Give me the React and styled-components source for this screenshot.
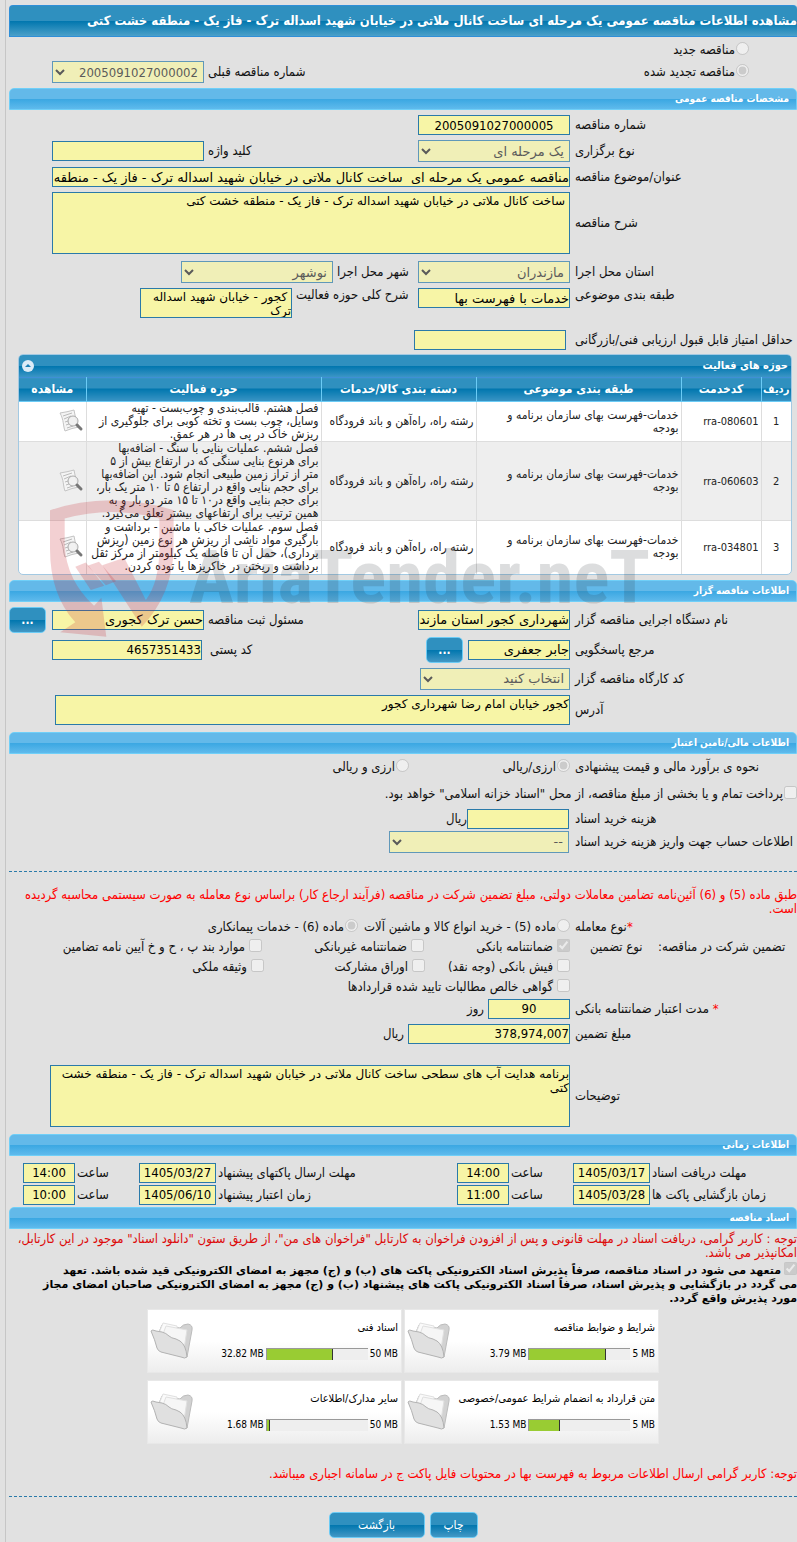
import React from 'react';
import styled, { createGlobalStyle } from 'styled-components';
import { useId } from 'react';

const GlobalStyle = createGlobalStyle`
    *{
        box-sizing: border-box;
    }
    body{
        margin: 0;
        background: #e1e1e1;
        overflow-x: hidden;
    }
    body, button{
        font-family: 'DejaVu Sans Condensed', 'DejaVu Sans', sans-serif;
    }
`

const numberFont = `'DejaVu Sans Condensed', 'DejaVu Sans', sans-serif`;
const textFont = `'DejaVu Sans', sans-serif`;

const Page = styled.main`
    direction: rtl;
    margin-left: 5px;
    padding: 5px 0 5px 3px;
    border-left: 1px solid #c6c6c6;
    color: #111;
    font-size: 13px;
    line-height: 14px;
    overflow: hidden;
`

const TitleBar = styled.h1`
    display: flex;
    align-items: center;
    height: 32px;
    margin: 0;
    border: 1px solid #2f8fd8;
    border-right: 0;
    border-radius: 4px 4px 0 0;
    background: linear-gradient(#2f90bf 0 50%, #0076ae 50%, #4ba0c9);
    color: #fff;
    font-size: 13px;
    font-weight: bold;
    white-space: nowrap;
`

const SectionBar = styled.h2`
    display: flex;
    align-items: center;
    height: 22px;
    margin: ${props => props.$top || 0}px 0 0;
    padding: 0 7px;
    border: 1px solid #6fcff8;
    border-radius: 5px 5px 0 0;
    background: linear-gradient(#63b9e9 0 50%, #3aa7e2 50%, #5fbaec);
    color: #fff;
    font-size: 10px;
    font-weight: bold;
`

const Stack = styled.div`
    display: flex;
    flex-direction: column;
    gap: ${props => props.$gap || 0}px;
    padding-top: ${props => props.$top || 0}px;
`

const Row = styled.div`
    display: flex;
    align-items: ${props => props.$align || 'center'};
    gap: ${props => props.$gap || 0}px;
    min-height: ${props => props.$height || 20}px;
    margin-top: ${props => props.$top || 0}px;
    white-space: nowrap;
`

const Label = styled.label`
    flex: none;
    width: ${props => props.$width || 222}px;
    margin-left: ${props => props.$gap || 5}px;
    text-align: left;
`

const Space = styled.div`
    flex: none;
    width: ${props => props.$width || 227}px;
`

const Input = styled.input`
    flex: none;
    width: ${props => props.$width || 152}px;
    height: 20px;
    margin: 0;
    padding: 1px 0;
    border: 1px solid #2a7aa9;
    border-radius: 0;
    background: #f7f5a6;
    color: #000;
    font-family: ${props => props.$number ? numberFont : textFont};
    font-size: 13px;
    text-align: ${props => props.$align || 'right'};
`

const Select = styled.select`
    flex: none;
    width: ${props => props.$width || 152}px;
    height: 22px;
    margin: 0;
    padding: 0 1px;
    border: 1px solid #2a7aa9;
    border-radius: 0;
    background-color: #f7f5a6;
    color: #222;
    font-family: ${props => props.$number ? numberFont : textFont};
    font-size: 13px;
    opacity: 0.7;
`

const TextArea = styled.textarea`
    flex: none;
    width: ${props => props.$width}px;
    height: ${props => props.$height}px;
    margin: 0;
    padding: 1px ${props => props.$pad || 0}px;
    border: 1px solid #2a7aa9;
    border-radius: 0;
    background: #f7f5a6;
    color: #000;
    font-family: ${textFont};
    font-size: 12px;
    line-height: 14px;
    resize: none;
    overflow: hidden;
`

const ChoiceLabel = styled.label`
    display: flex;
    flex: none;
    align-items: center;
    gap: ${props => props.$gap || 1}px;
    width: ${props => props.$width ? props.$width + 'px' : 'auto'};
    input{
        flex: none;
        width: 13px;
        height: 13px;
        margin: 0 0 3px;
    }
`

const Button = styled.button`
    flex: none;
    width: ${props => props.$width || 37}px;
    height: 26px;
    padding: 0;
    border: 1px solid #6bcbf5;
    border-radius: 5px;
    background: linear-gradient(#2f90bf 0 50%, #0076ae 50%, #4398c5);
    color: #fff;
    font-size: 12px;
    font-weight: ${props => props.$bold ? 'bold' : 'normal'};
`

const Notice = styled.p`
    margin: ${props => props.$top || 0}px 0 0;
    color: ${props => props.$color || '#f00'};
    white-space: nowrap;
`

const Commitment = styled.label`
    display: block;
    margin-top: 2px;
    color: #000;
    font-family: ${textFont};
    font-size: 11px;
    font-weight: bold;
    line-height: 14px;
    white-space: nowrap;
    input{
        width: 13px;
        height: 13px;
        margin: 0 0 0 3px;
        vertical-align: -1px;
    }
`

const Required = styled.span`
    color: #f00;
`

const Divider = styled.hr`
    margin: ${props => props.$top}px 0 0;
    border: 0;
    border-top: 1px dashed #2a7aa9;
`

const Panel = styled.section`
    margin: 4px 5px 5px 9px;
    border: 1px solid #a3c9e2;
    border-radius: 5px;
    background: #fff;
    overflow: hidden;
`

const PanelHead = styled.div`
    display: flex;
    align-items: center;
    justify-content: space-between;
    height: 22px;
    padding: 0 3px;
    background: linear-gradient(#2f90bf 0 50%, #0076ae 50%, #3b95c5);
    h3{
        margin: 0;
        color: #fff;
        font-size: 11px;
    }
    button{
        display: flex;
        width: 12px;
        height: 12px;
        padding: 0;
        border: 0;
        border-radius: 6px;
        background: #dcebf7;
    }
`

const Table = styled.table`
    width: 100%;
    border-collapse: collapse;
    table-layout: fixed;
    font-size: 12px;
    line-height: 13px;
    th{
        height: 24px;
        padding: 0;
        border-left: 1px solid #6bcbf5;
        border-top: 1px solid #3f8fd6;
        border-bottom: 1px solid #6bcbf5;
        background: linear-gradient(#2f90bf 0 45%, #0076ae 45%, #3b95c5);
        color: #fff;
        font-size: 12px;
        white-space: nowrap;
    }
    th:first-child{
        font-size: 11px;
    }
    td{
        padding: 0 2px;
        border-left: 1px solid #ddd;
        border-bottom: 1px solid #ddd;
        color: #222;
        text-align: right;
        white-space: pre;
    }
    tr:nth-child(even) td{
        background: #eee;
    }
    tr:last-child td{
        border-bottom: 0;
    }
    th:last-child, td:last-child{
        border-left: 0;
        padding: 0;
    }
    td:nth-child(-n+2){
        font-size: 11px;
    }
    td:first-child{
        text-align: center;
    }
    svg{
        display: block;
        margin-right: 2px;
    }
`

const Marked = styled.div`
    position: relative;
`

const Watermark = styled.div`
    position: absolute;
    top: 146px;
    left: 41px;
    display: flex;
    gap: 15px;
    direction: ltr;
    pointer-events: none;
    color: rgba(40, 44, 48, 0.16);
    font: bold 75px/100px 'Liberation Sans Narrow', 'Roboto Condensed', 'DejaVu Sans Condensed', sans-serif;
    svg{
        flex: none;
        width: 124px;
        height: 137px;
    }
    span{
        padding-top: 27px;
    }
`

const Cards = styled.div`
    display: grid;
    grid-template-columns: 255px 255px;
    justify-content: center;
    gap: 7px 2px;
    margin-top: 3px;
`

const Card = styled.div`
    display: flex;
    align-items: center;
    justify-content: space-between;
    height: 64px;
    padding: 0 3px 0 2px;
    border: 1px solid #e8e8e8;
    background: linear-gradient(#fff 50%, #ededed);
    color: #000;
    font-size: 11px;
    white-space: nowrap;
    svg{
        flex: none;
    }
`

const CardBody = styled.div`
    display: flex;
    flex-direction: column;
    gap: 12px;
`

const Usage = styled.div`
    display: flex;
    align-items: center;
    gap: 2px;
    direction: ltr;
    justify-content: flex-end;
    font-size: 10px;
`

const Meter = styled.div`
    width: 102px;
    height: 12px;
    border-top: 1px solid #999;
    border-left: 1px solid #999;
    background: #eee;
    div{
        height: 100%;
        border-right: 1px solid #333;
        background: #9c3;
    }
`

const Actions = styled.div`
    display: flex;
    justify-content: center;
    gap: 5px;
    margin-top: 15px;
`

const activities = [
    {
        code: 'rra-080601',
        height: 39,
        scope: 'فصل هشتم. قالب‌بندی و چوب‌بست - تهیه\nوسایل، چوب بست و تخته کوبی برای جلوگیری از\nریزش خاک در پی ها در هر عمق.',
    },
    {
        code: 'rra-060603',
        height: 79,
        scope: 'فصل ششم. عملیات بنایی با سنگ - اضافه‌بها\nبرای هرنوع بنایی سنگی که در ارتفاع بیش از ۵\nمتر از تراز زمین طبیعی انجام شود. این اضافه‌بها\nبرای حجم بنایی واقع در ارتفاع ۵ تا ۱۰ متر یک بار،\nبرای حجم بنایی واقع در۱۰ تا ۱۵ متر دو بار و به\nهمین ترتیب برای ارتفاعهای بیشتر تعلق می‌گیرد.',
    },
    {
        code: 'rra-034801',
        height: 53,
        scope: 'فصل سوم. عملیات خاکی با ماشین - برداشت و\nبارگیری مواد ناشی از ریزش هر نوع زمین (ریزش\nبرداری)، حمل آن تا فاصله یک کیلومتر از مرکز ثقل\nبرداشت و ریختن در خاکریزها یا توده کردن.',
    },
];

const documents = [
    { name: 'شرایط و ضوابط مناقصه', used: 3.79, limit: 5 },
    { name: 'اسناد فنی', used: 32.82, limit: 50 },
    { name: 'متن قرارداد به انضمام شرایط عمومی/خصوصی', used: 1.53, limit: 5 },
    { name: 'سایر مدارک/اطلاعات', used: 1.68, limit: 50 },
];

const times = [
    [['مهلت دریافت اسناد', '1405/03/17', '14:00'], ['مهلت ارسال پاکتهای پیشنهاد', '1405/03/27', '14:00']],
    [['زمان بازگشایی پاکت ها', '1405/03/28', '11:00'], ['زمان اعتبار پیشنهاد', '1405/06/10', '10:00']],
];

function Field({ label, value, labelWidth, gap, width, align, number }){
    const id = useId();
    return(
        <>
            <Label htmlFor={id} $width={labelWidth} $gap={gap}>{label}</Label>
            <Input id={id} $width={width} $align={align} $number={number} defaultValue={value} readOnly/>
        </>
    );
}

function SelectField({ label, value, labelWidth, gap, width, number }){
    const id = useId();
    return(
        <>
            <Label htmlFor={id} $width={labelWidth} $gap={gap}>{label}</Label>
            <Select id={id} $width={width} $number={number} disabled>
                <option>{value}</option>
            </Select>
        </>
    );
}

function AreaField({ label, value, labelWidth, gap, width, height, pad }){
    const id = useId();
    return(
        <>
            <Label htmlFor={id} $width={labelWidth} $gap={gap}>{label}</Label>
            <TextArea id={id} $width={width} $height={height} $pad={pad} defaultValue={value} readOnly/>
        </>
    );
}

function Choice({ type = 'checkbox', name, checked, width, gap, children }){
    return(
        <ChoiceLabel $width={width} $gap={gap}>
            <input type={type} name={name} defaultChecked={checked} disabled/>
            {children}
        </ChoiceLabel>
    );
}

function ViewIcon(){
    return(
        <svg width='25' height='25' viewBox='0 0 25 25' fill='none'>
            <path d='M1 4 Q8 3 15 1 Q16 10 20 18 Q13 19 6 22 C4 17 5 11 1 4Z' fill='#f4f4f4' stroke='#c4c4c4'/>
            <path d='M4 7 L13 4 M5 10 L12 7 M6 13 L9 12 M7 16 L10 15 M8 19 L14 17' stroke='#bbb'/>
            <circle cx='14' cy='12' r='5' fill='#f0f0f0' fillOpacity='0.85' stroke='#aaa' strokeWidth='1'/>
            <path d='M18 16 L22 20' stroke='#777' strokeWidth='3' strokeLinecap='round'/>
        </svg>
    );
}

function FolderIcon(){
    return(
        <svg width='44' height='40' viewBox='0 0 44 40'>
            <path d='M9 11 L12 4 L30 7 Q33 3 38 3 Q43 4 42 9 L37 36 L34 34 L10 28Z' fill='#d2d2d2' stroke='#bcbcbc'/>
            <path d='M9 12 L13 2 L27 5 L27 18Z' fill='#fafafa' stroke='#e0e0e0'/>
            <path d='M13 13 L16 5 L37 9 L34 28Z' fill='#f6f6f6' stroke='#e0e0e0'/>
            <path d='M1 10 Q2 8 6 10 L12 11 Q16 12 19 15 Q21 17 26 18 L30 20 Q36 24 37 36 Q35 38 31 36 L11 31 Q8 30 7 27 Q5 19 1 10Z' fill='#e0e0e0' stroke='#b2b2b2'/>
        </svg>
    );
}

function ShieldLogo(){
    return(
        <svg viewBox='50 44 304 412' preserveAspectRatio='none' fill='rgba(200, 40, 50, 0.22)'>
            <path d='M50 75 Q120 46 200 45 Q285 47 353 75 L353 190 Q350 330 275 425 L178 240 L232 218 L285 345 Q318 290 318 190 L318 100 Q200 60 86 100 L86 180 Q90 285 158 362 L176 338 L188 455 L75 442 L112 412 Q50 330 50 190Z'/>
            <path d='M112 245 L138 232 L183 302 L150 315Z'/>
            <path d='M142 242 L170 230 L212 288 L187 300Z'/>
        </svg>
    );
}

function DocumentCard({ name, used, limit }){
    return(
        <Card>
            <CardBody>
                <span>{name}</span>
                <Usage>
                    <span>{used} MB</span>
                    <Meter role='progressbar' aria-label={name} aria-valuenow={used} aria-valuemax={limit}>
                        <div style={{ width: (used / limit * 100) + '%' }}/>
                    </Meter>
                    <span>{limit} MB</span>
                </Usage>
            </CardBody>
            <FolderIcon/>
        </Card>
    );
}

function Activities(){
    return(
        <Panel>
            <PanelHead>
                <h3>حوزه های فعالیت</h3>
                <button type='button' aria-label='بستن'>
                    <svg width='12' height='12' viewBox='0 0 12 12'><path d='M3 7 L6 4 L9 7Z' fill='#1c7fb5'/></svg>
                </button>
            </PanelHead>
            <Table>
                <colgroup>
                    <col width='30'/>
                    <col width='80'/>
                    <col width='205'/>
                    <col width='155'/>
                    <col width='235'/>
                    <col/>
                </colgroup>
                <thead>
                    <tr>
                        <th>ردیف</th>
                        <th>کدخدمت</th>
                        <th>طبقه بندی موضوعی</th>
                        <th>دسته بندی کالا/خدمات</th>
                        <th>حوزه فعالیت</th>
                        <th>مشاهده</th>
                    </tr>
                </thead>
                <tbody>
                    {activities.map((item, i) => (
                        <tr key={item.code} height={item.height}>
                            <td>{i + 1}</td>
                            <td>{item.code}</td>
                            <td>{'خدمات-فهرست بهای سازمان برنامه و\nبودجه'}</td>
                            <td>رشته راه، راه‌آهن و باند فرودگاه</td>
                            <td>{item.scope}</td>
                            <td><ViewIcon/></td>
                        </tr>
                    ))}
                </tbody>
            </Table>
        </Panel>
    );
}

function App(){
    return(
        <>
        <GlobalStyle/>
        <Page>
            <TitleBar>مشاهده اطلاعات مناقصه عمومی یک مرحله ای ساخت کانال ملاتی در خیابان شهید اسداله ترک - فاز یک - منطقه خشت کتی</TitleBar>
            <Stack $top={3}>
                <Row>
                    <Space $width={48}/>
                    <Choice type='radio' name='kind'>مناقصه جدید</Choice>
                </Row>
                <Row $height={22} $top={1}>
                    <Space $width={48}/>
                    <Choice type='radio' name='kind' checked width={331}>مناقصه تجدید شده</Choice>
                    <SelectField label='شماره مناقصه قبلی' value='2005091027000002' labelWidth={210} gap={4} number/>
                </Row>
            </Stack>

            <SectionBar $top={5}>مشخصات مناقصه عمومی</SectionBar>
            <Stack $gap={5} $top={5}>
                <Row><Field label='شماره مناقصه' value='2005091027000005' align='center' number/></Row>
                <Row $height={22}>
                    <SelectField label='نوع برگزاری' value='یک مرحله ای'/>
                    <Field label='کلید واژه' labelWidth={210} gap={4}/>
                </Row>
                <Row><Field label='عنوان/موضوع مناقصه' width={518} value='مناقصه عمومی یک مرحله ای  ساخت کانال ملاتی در خیابان شهید اسداله ترک - فاز یک - منطقه خشت کتی'/></Row>
                <Row><AreaField label='شرح مناقصه' width={518} height={62} pad={4} value='ساخت کانال ملاتی در خیابان شهید اسداله ترک - فاز یک - منطقه خشت کتی'/></Row>
                <Row $height={22} $top={2}>
                    <SelectField label='استان محل اجرا' value='مازندران'/>
                    <SelectField label='شهر محل اجرا' value='نوشهر' labelWidth={81} gap={4}/>
                </Row>
                <Row $align='flex-start'>
                    <Field label='طبقه بندی موضوعی' value='خدمات با فهرست بها'/>
                    <AreaField label='شرح کلی حوزه فعالیت' value=' کجور - خیابان شهید اسداله ترک' labelWidth={122} gap={4} width={152} height={30}/>
                </Row>
                <Row $top={7}><Field label='حداقل امتیاز قابل قبول ارزیابی فنی/بازرگانی' gap={9}/></Row>
            </Stack>

            <Marked>
                <Activities/>
                <SectionBar>اطلاعات مناقصه گزار</SectionBar>
                <Stack $top={3}>
                    <Row $height={30}>
                        <Field label='نام دستگاه اجرایی مناقصه گزار' value='شهرداری کجور استان مازندران'/>
                        <Field label='مسئول ثبت مناقصه' value='حسن ترک کجوری' labelWidth={210} gap={4}/>
                        <Space $width={6}/>
                        <Button type='button' $bold>...</Button>
                    </Row>
                    <Row $height={30}>
                        <Field label='مرجع پاسخگویی' value='جابر جعفری' width={102}/>
                        <Space $width={5}/>
                        <Button type='button' $bold>...</Button>
                        <Field label='کد پستی' value='4657351433' labelWidth={216} gap={8} width={150} number/>
                    </Row>
                    <Row $height={22} $top={3}><SelectField label='کد کارگاه مناقصه گزار' value='انتخاب کنید' width={150}/></Row>
                    <Row $top={5}><AreaField label='آدرس' value='کجور خیابان امام رضا شهرداری کجور' width={515} height={30}/></Row>
                </Stack>
                <Watermark aria-hidden='true'>
                    <ShieldLogo/>
                    <span>AriaTender.neT</span>
                </Watermark>
            </Marked>

            <SectionBar $top={7}>اطلاعات مالی/تامین اعتبار</SectionBar>
            <Stack $top={3}>
                <Row>
                    <Label as='span'>نحوه ی برآورد مالی و قیمت پیشنهادی</Label>
                    <Choice type='radio' name='currency' checked width={161}>ارزی/ریالی</Choice>
                    <Choice type='radio' name='currency'>ارزی و ریالی</Choice>
                </Row>
                <Row $top={7}><Choice>پرداخت تمام و یا بخشی از مبلغ مناقصه، از محل "اسناد خزانه اسلامی" خواهد بود.</Choice></Row>
                <Row $top={5}><Field label='هزینه خرید اسناد' width={102} gap={6}/>ریال</Row>
                <Row $height={22} $top={2}><SelectField label='اطلاعات حساب جهت واریز هزینه خرید اسناد' value='--' width={180} gap={6}/></Row>
            </Stack>
            <Divider $top={18}/>
            <Notice $top={16}>
                طبق ماده (5) و (6) آئین‌نامه تضامین معاملات دولتی، مبلغ تضمین شرکت در مناقصه (فرآیند ارجاع کار) براساس نوع معامله به صورت سیستمی محاسبه گردیده<br/>است.
            </Notice>
            <Stack $top={1}>
                <Row>
                    <Label as='span'><Required>*</Required>نوع معامله</Label>
                    <Choice type='radio' name='deal' width={212}>ماده (5) - خرید انواع کالا و ماشین آلات</Choice>
                    <Choice type='radio' name='deal' checked>ماده (6) - خدمات پیمانکاری</Choice>
                </Row>
                <Row>
                    <Label as='span' $width={139} $gap={15}>تضمین شرکت در مناقصه:</Label>
                    <Label as='span' $width={53} $gap={20}>نوع تضمین</Label>
                    <Choice gap={4} width={146} checked>ضمانتنامه بانکی</Choice>
                    <Choice gap={4} width={162}>ضمانتنامه غیربانکی</Choice>
                    <Choice gap={4}>موارد بند پ ، ح و خ آیین نامه تضامین</Choice>
                </Row>
                <Row>
                    <Space/>
                    <Choice gap={4} width={145}>فیش بانکی (وجه نقد)</Choice>
                    <Choice gap={4} width={161}>اوراق مشارکت</Choice>
                    <Choice gap={4}>وثیقه ملکی</Choice>
                </Row>
                <Row>
                    <Space/>
                    <Choice gap={4}>گواهی خالص مطالبات تایید شده قراردادها</Choice>
                </Row>
                <Row $top={2}>
                    <Field label={<><Required>*</Required> مدت اعتبار ضمانتنامه بانکی</>} value='90' width={82} align='center' number/>
                    <Space $width={4}/>روز
                </Row>
                <Row $top={5}>
                    <Field label='مبلغ تضمین' value='378,974,007' width={162} number/>
                    <Space $width={4}/>ریال
                </Row>
                <Row $top={21}><AreaField label='توضیحات' width={520} height={62} value='برنامه هدایت آب های سطحی ساخت کانال ملاتی در خیابان شهید اسداله ترک - فاز یک - منطقه خشت کتی'/></Row>
            </Stack>

            <SectionBar $top={7}>اطلاعات زمانی</SectionBar>
            <Stack $top={7} $gap={2}>
                {times.map((row, i) => (
                    <Row key={i}>
                        {row.map(([label, date, hour], j) => (
                            <React.Fragment key={label}>
                                <Field label={label} value={date} labelWidth={j === 0 ? 145 : 239} gap={2} width={77} align='center' number/>
                                <Field label='ساعت' value={hour} labelWidth={62} gap={2} width={52} align='center' number/>
                            </React.Fragment>
                        ))}
                    </Row>
                ))}
            </Stack>

            <SectionBar $top={2}>اسناد مناقصه</SectionBar>
            <Notice $top={3} $color='#dd0a0a'>
                توجه : کاربر گرامی، دریافت اسناد در مهلت قانونی و پس از افزودن فراخوان به کارتابل "فراخوان های من"، از طریق ستون "دانلود اسناد" موجود در این کارتابل،<br/>امکانپذیر می باشد.
            </Notice>
            <Commitment>
                <input type='checkbox' defaultChecked disabled/>
                متعهد می شود در اسناد مناقصه، صرفاً پذیرش اسناد الکترونیکی پاکت های (ب) و (ج) مجهز به امضای الکترونیکی قید شده باشد. تعهد<br/>
                می گردد در بازگشایی و پذیرش اسناد، صرفاً اسناد الکترونیکی پاکت های پیشنهاد (ب) و (ج) مجهز به امضای الکترونیکی صاحبان امضای مجاز<br/>
                مورد پذیرش واقع گردد.
            </Commitment>
            <Cards>
                {documents.map(doc => <DocumentCard key={doc.name} {...doc}/>)}
            </Cards>
            <Notice $top={23}>توجه: کاربر گرامی ارسال اطلاعات مربوط به فهرست بها در محتویات فایل پاکت ج در سامانه اجباری میباشد.</Notice>
            <Divider $top={15}/>
            <Actions>
                <Button type='button' $width={48}>چاپ</Button>
                <Button type='button' $width={96}>بازگشت</Button>
            </Actions>
        </Page>
        </>
    );
}

export default App;
